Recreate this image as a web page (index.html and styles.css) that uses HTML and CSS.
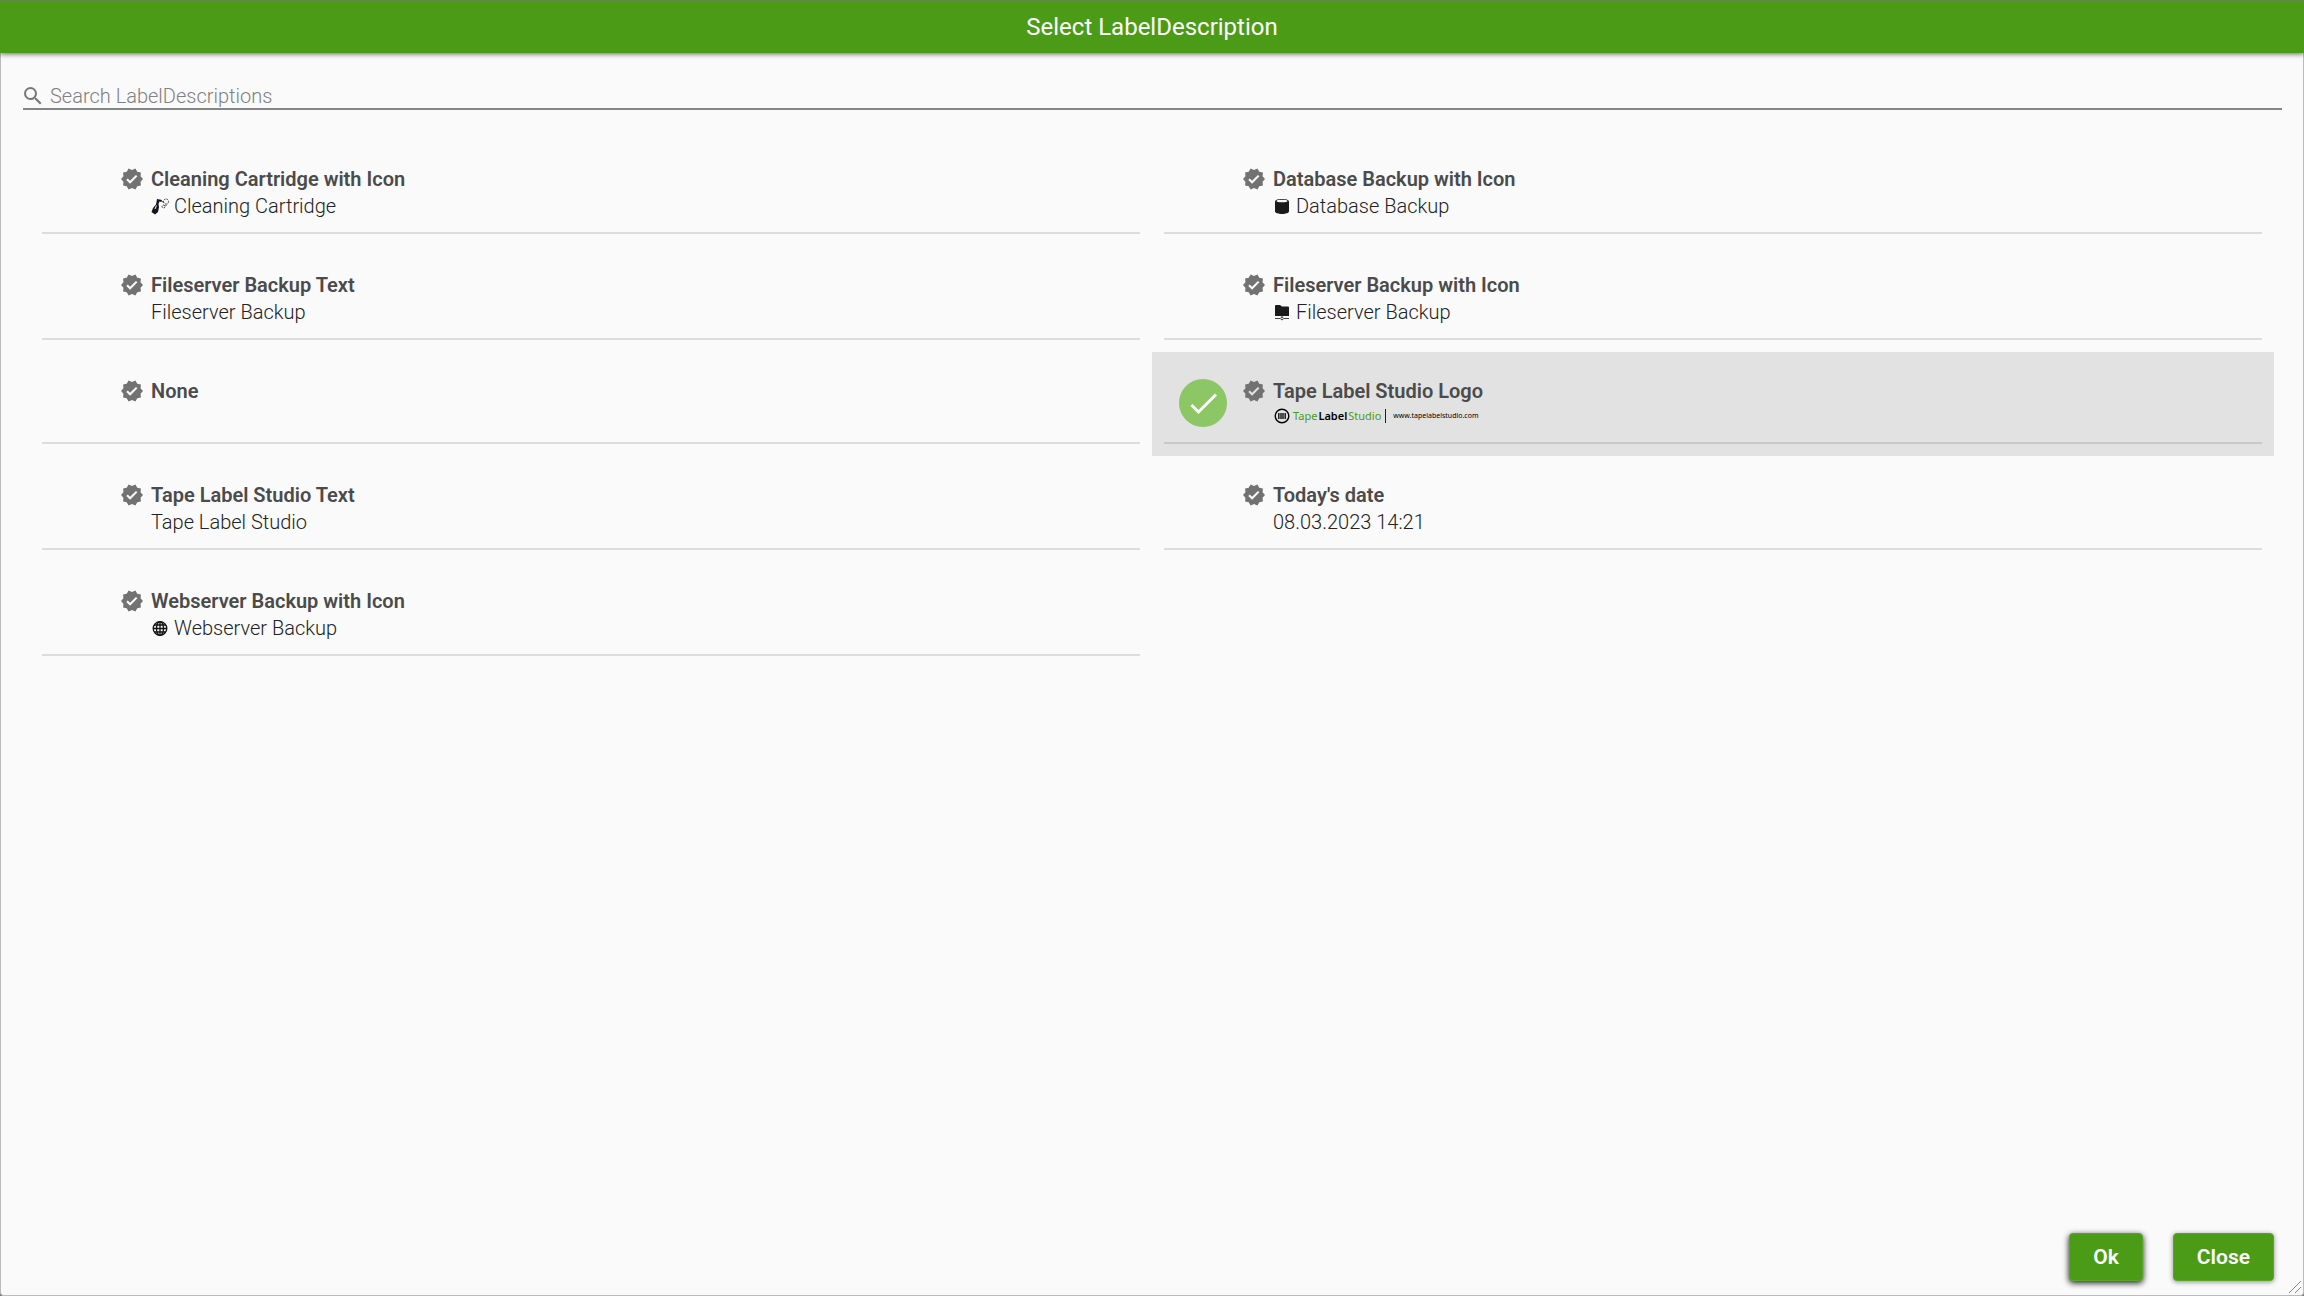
FILE: index.html
```
<!DOCTYPE html>
<html lang="en">
<head>
    <meta charset="UTF-8">
    <title>Select LabelDescription</title>
    <link rel="stylesheet" href="styles.css">
</head>
<body>
    <!-- shared icons -->
    <svg class="sprite" aria-hidden="true">
        <symbol id="verified" viewBox="0 0 24 24">
            <path d="M23 12l-2.44-2.79.34-3.69-3.61-.82-1.89-3.2L12 2.96 8.6 1.5 6.71 4.69 3.1 5.5l.34 3.7L1 12l2.44 2.79-.34 3.7 3.61.82L8.6 22.5l3.4-1.47 3.4 1.46 1.89-3.19 3.61-.82-.34-3.69L23 12zm-12.91 4.72l-3.8-3.81 1.48-1.48 2.32 2.33 5.85-5.87 1.48 1.48-7.33 7.35z"/>
        </symbol>
        <symbol id="check" viewBox="0 0 48 48">
            <path d="M12.5 26l7 7L37 15.500" fill="none" stroke="#fff" stroke-width="3"/>
        </symbol>
    </svg>

    <div class="dialog">
        <header class="dialog-header">
            <h1>Select LabelDescription</h1>
        </header>

        <label class="search">
            <svg class="search-icon" viewBox="3 3 18 18" aria-hidden="true"><path d="M15.5 14h-.79l-.28-.27A6.471 6.471 0 0 0 16 9.500 6.500 6.500 0 1 0 9.500 16c1.610 0 3.090-.59 4.230-1.570l.27.28v.79l5 4.990L20.490 19l-4.990-5zm-6 0C7.010 14 5 11.990 5 9.500S7.010 5 9.500 5 14 7.010 14 9.500 11.990 14 9.500 14z"/></svg>
            <input type="text" placeholder="Search LabelDescriptions" aria-label="Search LabelDescriptions">
        </label>

        <main class="list">
            <label class="item">
                <span class="item-inner">
                    <span class="mark"><input type="radio" name="description"><svg><use href="#check"/></svg></span>
                    <svg class="verified"><use href="#verified"/></svg>
                    <span class="text">
                        <span class="title">Cleaning Cartridge with Icon</span>
                        <span class="sub">
                            <svg class="sub-icon" viewBox="0 0 18 18">
                                <path d="M6 1l5 1-.5 2-2-.5L7.500 6l.5 3-1 5-3 2.500L.5 14 2 10l3-3.500z" fill="#15151f"/>
                                <path d="M5.500 7.500L4 11" stroke="#fafafa" fill="none"/>
                                <g fill="none" stroke="#333" stroke-dasharray="2 1">
                                    <circle cx="15" cy="3.500" r="2.500"/>
                                    <circle cx="12.500" cy="8.500" r="1.500"/>
                                    <path d="M11 3.500l2 1M14.500 8l2-2"/>
                                </g>
                            </svg>
                            Cleaning Cartridge
                        </span>
                    </span>
                </span>
            </label>

            <label class="item">
                <span class="item-inner">
                    <span class="mark"><input type="radio" name="description"><svg><use href="#check"/></svg></span>
                    <svg class="verified"><use href="#verified"/></svg>
                    <span class="text">
                        <span class="title">Database Backup with Icon</span>
                        <span class="sub">
                            <svg class="sub-icon" viewBox="0 0 18 18">
                                <path d="M2 3.500c0-3.300 14-3.300 14 0v10c0 3.300-14 3.300-14 0z" fill="#1b1b1b"/>
                                <ellipse cx="9" cy="3" rx="5.500" ry="1.300" fill="#fafafa"/>
                            </svg>
                            Database Backup
                        </span>
                    </span>
                </span>
            </label>

            <label class="item">
                <span class="item-inner">
                    <span class="mark"><input type="radio" name="description"><svg><use href="#check"/></svg></span>
                    <svg class="verified"><use href="#verified"/></svg>
                    <span class="text">
                        <span class="title">Fileserver Backup Text</span>
                        <span class="sub">Fileserver Backup</span>
                    </span>
                </span>
            </label>

            <label class="item">
                <span class="item-inner">
                    <span class="mark"><input type="radio" name="description"><svg><use href="#check"/></svg></span>
                    <svg class="verified"><use href="#verified"/></svg>
                    <span class="text">
                        <span class="title">Fileserver Backup with Icon</span>
                        <span class="sub">
                            <svg class="sub-icon" viewBox="0 0 18 18">
                                <path d="M2 2q0-1 1-1h4l2 1.500h6q1 0 1 1V12H2z" fill="#1b1b1b"/>
                                <path d="M2 14.500h5M11 14.500h5M9 12v1" stroke="#444" fill="none"/>
                                <circle cx="9" cy="14.500" r="1.300" fill="none" stroke="#444"/>
                            </svg>
                            Fileserver Backup
                        </span>
                    </span>
                </span>
            </label>

            <label class="item">
                <span class="item-inner">
                    <span class="mark"><input type="radio" name="description"><svg><use href="#check"/></svg></span>
                    <svg class="verified"><use href="#verified"/></svg>
                    <span class="text">
                        <span class="title">None</span>
                    </span>
                </span>
            </label>

            <label class="item">
                <span class="item-inner">
                    <span class="mark"><input type="radio" name="description" checked><svg><use href="#check"/></svg></span>
                    <svg class="verified"><use href="#verified"/></svg>
                    <span class="text">
                        <span class="title">Tape Label Studio Logo</span>
                        <span class="logo">
                            <svg class="logo-icon" viewBox="0 0 16 16">
                                <circle cx="8" cy="8" r="6.800" fill="none" stroke="#000" stroke-width="1.400"/>
                                <path d="M4 5h8v6H4z" fill="#777"/>
                                <path d="M4.500 5v6M7 5v6M9 5v6M11.500 5v6" stroke="#222"/>
                            </svg>
                            <span class="logo-name"><span>Tape</span><b>Label</b><span>Studio</span></span>
                            <span class="logo-url">www.tapelabelstudio.com</span>
                        </span>
                    </span>
                </span>
            </label>

            <label class="item">
                <span class="item-inner">
                    <span class="mark"><input type="radio" name="description"><svg><use href="#check"/></svg></span>
                    <svg class="verified"><use href="#verified"/></svg>
                    <span class="text">
                        <span class="title">Tape Label Studio Text</span>
                        <span class="sub">Tape Label Studio</span>
                    </span>
                </span>
            </label>

            <label class="item">
                <span class="item-inner">
                    <span class="mark"><input type="radio" name="description"><svg><use href="#check"/></svg></span>
                    <svg class="verified"><use href="#verified"/></svg>
                    <span class="text">
                        <span class="title">Today's date</span>
                        <span class="sub">08.03.2023 14:21</span>
                    </span>
                </span>
            </label>

            <label class="item">
                <span class="item-inner">
                    <span class="mark"><input type="radio" name="description"><svg><use href="#check"/></svg></span>
                    <svg class="verified"><use href="#verified"/></svg>
                    <span class="text">
                        <span class="title">Webserver Backup with Icon</span>
                        <span class="sub">
                            <svg class="sub-icon" viewBox="0 0 18 18">
                                <g fill="none" stroke="#111" stroke-width="1.300">
                                    <circle cx="9" cy="8.500" r="6.800"/>
                                    <ellipse cx="9" cy="8.500" rx="3.500" ry="6.800"/>
                                    <path d="M9 1.500v14M2 8.500h14M3 5h12M3 12h12"/>
                                </g>
                            </svg>
                            Webserver Backup
                        </span>
                    </span>
                </span>
            </label>
        </main>

        <footer class="dialog-footer">
            <button type="button" class="btn focused">Ok</button>
            <button type="button" class="btn">Close</button>
        </footer>

        <svg class="resize-grip" viewBox="0 0 16 16" aria-hidden="true"><path d="M2 14L14 2M8 14l6-6" fill="none" stroke="#888"/></svg>
    </div>
</body>
</html>
```
FILE: styles.css
```
* { box-sizing: border-box; }
body {
    margin: 0;
    font-family: Roboto, sans-serif;
    font-size: 20px;
    color: #4b4b4b;
    background: #777;
}
.sprite { display: none; }

.dialog {
    position: relative;
    display: flex;
    flex-direction: column;
    min-height: 100vh;
    border: 1px solid #bbb;
    border-top: 0;
    border-radius: 0 0 4px 4px;
    background: #fafafa;
}
.dialog-header {
    margin: 0 -1px;
    padding: 12px;
    border-top: 1px solid #5f8a48;
    background: #4b9b17;
    color: #fff;
    text-align: center;
    box-shadow: 0 1px 5px rgba(0, 0, 0, 0.6);
}
h1 {
    margin: 0;
    font-size: 24px;
    line-height: 28px;
    font-weight: 400;
}

/* search */
.search {
    display: flex;
    align-items: center;
    gap: 8px;
    margin: 30px 21px 30px 22px;
    border-bottom: 2px solid #858585;
}
.search-icon {
    width: 18px;
    height: 18px;
    margin-left: 1px;
    fill: #777;
}
.search input {
    flex: 1;
    height: 25px;
    padding: 0;
    border: 0;
    outline: 0;
    background: none;
    font: inherit;
    font-weight: 300;
    color: inherit;
}
.search input::placeholder { color: #808080; }

/* list */
.list {
    display: grid;
    grid-template-columns: 1fr 1fr;
    padding: 0 29px;
}
.item {
    display: flex;
    padding: 12px;
    cursor: pointer;
}
.item:has(:checked) { background: #e2e2e2; }
.item-inner {
    flex: 1;
    display: flex;
    align-items: center;
    min-height: 80px;
    padding-left: 15px;
    border-bottom: 2px solid #ddd;
}
.item:has(:checked) .item-inner { border-color: #c9c9c9; }
.mark {
    display: grid;
    width: 48px;
    height: 48px;
    margin-right: 15px;
}
.mark input, .mark svg {
    grid-area: 1 / 1;
    width: 48px;
    height: 48px;
    margin: 0;
}
.mark input {
    appearance: none;
    border-radius: 50%;
}
.mark input:checked { background: #8cc665; }
.mark svg {
    visibility: hidden;
    pointer-events: none;
}
.mark input:checked + svg { visibility: visible; }
.verified {
    align-self: flex-start;
    width: 24px;
    height: 24px;
    margin: 15px 7px 0 0;
    fill: #727272;
}
.text {
    align-self: flex-start;
    padding: 14px 0 12px;
    line-height: 27px;
}
.title {
    display: block;
    font-weight: 600;
}
.sub {
    display: flex;
    align-items: center;
    gap: 5px;
    font-weight: 300;
    color: #222;
}
.sub-icon {
    width: 18px;
    height: 18px;
}

.logo {
    display: flex;
    align-items: center;
    height: 22px;
    font-family: "Noto Sans", sans-serif;
    line-height: 14px;
    color: #000;
}
.logo-icon {
    width: 16px;
    height: 16px;
    margin: 0 3px 0 1px;
}
.logo-name {
    display: flex;
    gap: 1px;
    padding-right: 4px;
    border-right: 1px solid #222;
    font-size: 11px;
    color: #4b9b17;
}
.logo-name b {
    font-weight: 600;
    color: #000;
}
.logo-url {
    padding-left: 7px;
    font-size: 7px;
}

/* buttons */
.dialog-footer {
    display: flex;
    justify-content: flex-end;
    gap: 30px;
    margin-top: auto;
    padding: 14px 29px;
}
.btn {
    height: 48px;
    padding: 0 23px;
    border: 1px solid #5aa52b;
    border-radius: 4px;
    background: #4b9b17;
    color: #fff;
    font: 600 21px Roboto, sans-serif;
    cursor: pointer;
    box-shadow: 0 1px 5px rgba(0, 0, 0, 0.45);
}
.btn.focused { box-shadow: 0 2px 6px rgba(0, 0, 0, 0.9); }
.resize-grip {
    position: absolute;
    right: 0;
    bottom: 0;
    width: 16px;
    height: 16px;
}
```
